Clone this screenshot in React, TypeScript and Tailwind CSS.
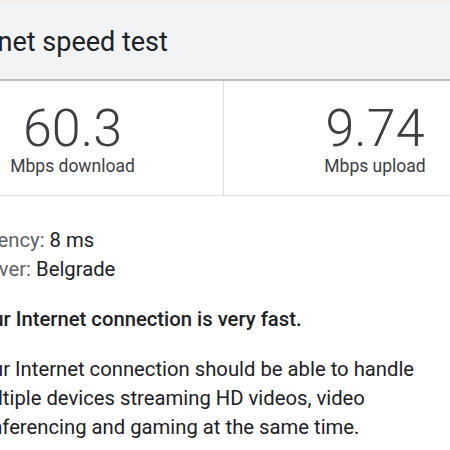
import React from "react";

export default function App() {
  return (
    <div className="w-[450px] h-[450px] overflow-hidden bg-white" style={{ fontFamily: "Roboto, 'Noto Sans', sans-serif" }}>
      <div className="w-[604px] -ml-[78px]">
        <div className="h-[3px] bg-[#f7eee7]" />
        <div className="h-[78px] bg-[#f1f3f4] border-b-2 border-[#bdbdbd] flex items-center pl-[21px]">
          <span className="text-[27px] text-[#202124] leading-none pt-[2px]">Internet speed test</span>
        </div>
        <div className="flex border-b border-[#dadce0] h-[115px]">
          <div className="w-[302px] border-r border-[#dadce0] flex flex-col items-center pt-[20px]">
            <div className="text-[52px] font-light text-[#3c4043] leading-[56px]">60.3</div>
            <div className="text-[17.5px] text-[#3c4043] leading-[18px]">Mbps download</div>
          </div>
          <div className="w-[302px] flex flex-col items-center pt-[20px]">
            <div className="text-[52px] font-light text-[#3c4043] leading-[56px]">9.74</div>
            <div className="text-[17.5px] text-[#3c4043] leading-[18px]">Mbps upload</div>
          </div>
        </div>
        <div className="pl-[47px] pt-[30px] text-[20.25px] leading-[29px] text-[#202124]">
          <div><span className="text-[#5f6368]">Latency:</span> 8 ms</div>
          <div><span className="text-[#5f6368]">Server:</span> Belgrade</div>
          <div className="font-medium mt-[21px]">Your Internet connection is very fast.</div>
          <p className="mt-[21px] w-[470px]">Your Internet connection should be able to handle multiple devices streaming HD videos, video conferencing and gaming at the same time.</p>
        </div>
      </div>
    </div>
  );
}
